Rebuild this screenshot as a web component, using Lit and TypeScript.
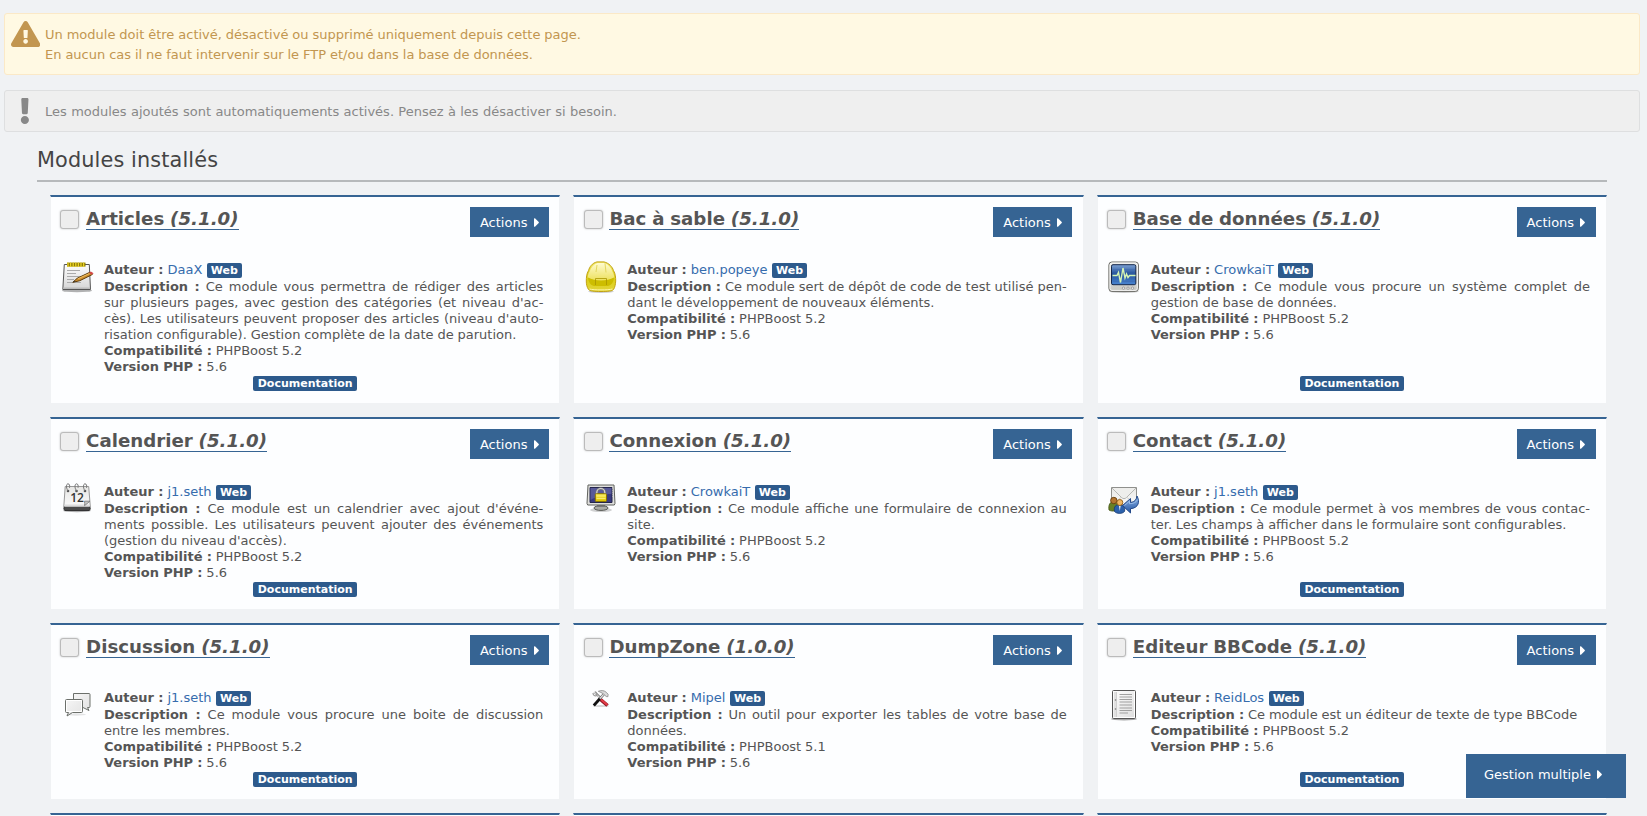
import { LitElement, html, svg, css, nothing } from "lit";
import type { TemplateResult } from "lit";
import { customElement, property } from "lit/decorators.js";

interface ModuleInfo {
  name: string;
  version: string;
  author: string;
  description: string;
  compat: string;
  icon: string;
  doc: boolean;
}

const MODULES: ModuleInfo[] = [
  { name: "Articles", version: "5.1.0", author: "DaaX", icon: "articles", compat: "5.2", doc: true,
    description: "Ce module vous permettra de rédiger des articles sur plusieurs pages, avec gestion des catégories (et niveau d'ac\u00ADcès). Les utilisateurs peuvent proposer des articles (niveau d'auto\u00ADrisation configurable). Gestion complète de la date de parution." },
  { name: "Bac à sable", version: "5.1.0", author: "ben.popeye", icon: "helmet", compat: "5.2", doc: false,
    description: "Ce module sert de dépôt de code de test utilisé pen\u00ADdant le développement de nouveaux éléments." },
  { name: "Base de données", version: "5.1.0", author: "CrowkaiT", icon: "monitor", compat: "5.2", doc: true,
    description: "Ce module vous procure un système complet de gestion de base de données." },
  { name: "Calendrier", version: "5.1.0", author: "j1.seth", icon: "calendar", compat: "5.2", doc: true,
    description: "Ce module est un calendrier avec ajout d'événe\u00ADments possible. Les utilisateurs peuvent ajouter des événements (gestion du niveau d'accès)." },
  { name: "Connexion", version: "5.1.0", author: "CrowkaiT", icon: "lock", compat: "5.2", doc: false,
    description: "Ce module affiche une formulaire de connexion au site." },
  { name: "Contact", version: "5.1.0", author: "j1.seth", icon: "contact", compat: "5.2", doc: true,
    description: "Ce module permet à vos membres de vous contac\u00ADter. Les champs à afficher dans le formulaire sont configurables." },
  { name: "Discussion", version: "5.1.0", author: "j1.seth", icon: "chat", compat: "5.2", doc: true,
    description: "Ce module vous procure une boite de discussion entre les membres." },
  { name: "DumpZone", version: "1.0.0", author: "Mipel", icon: "tools", compat: "5.1", doc: false,
    description: "Un outil pour exporter les tables de votre base de données." },
  { name: "Editeur BBCode", version: "5.1.0", author: "ReidLos", icon: "page", compat: "5.2", doc: true,
    description: "Ce module est un éditeur de texte de type BBCode" },
];

const caret = html`<svg class="caret" viewBox="0 0 192 512" aria-hidden="true"><path fill="currentColor" d="M0 384.662V127.338c0-17.818 21.543-26.741 34.142-14.142l128.662 128.662c7.81 7.81 7.81 20.474 0 28.284L34.142 398.804C21.543 411.404 0 402.48 0 384.662z"/></svg>`;

const ICONS: Record<string, TemplateResult> = {
  articles: svg`
    <defs><linearGradient id="g" x2="0" y2="1"><stop offset="0" stop-color="#fdfdfd"/><stop offset="1" stop-color="#d6d6d6"/></linearGradient></defs>
    <ellipse cx="15" cy="29.7" rx="15" ry="1.6" fill="#000" opacity=".3"/>
    <path d="M2.3 3.5h25l1.200 25H.8z" fill="url(#g)" stroke="#555" stroke-width="1"/>
    <path d="M1.300 26.500h26.800v1.500H1.300z" fill="#bbb"/>
    <path d="M5 3.600h18.500" stroke="#8d7b00" stroke-width="4"/>
    <path d="M6 1.500v4.500M8.600 1.500v4.500M11.200 1.500v4.500M13.800 1.500v4.500M16.400 1.500v4.500M19 1.500v4.500M21.600 1.500v4.500" stroke="#ead32a" stroke-width="1.300"/>
    <path d="M5 9.500h13M5 12.500h9M5 15.500h17M5 18.500h7M5 21.500h14" stroke="#aaa"/>
    <path d="M10.800 21.300l4.500-4.100L28 11.200l2.300 2.300-12.500 6.200z" fill="#cf8f2c" stroke="#5e3c0a" stroke-width="1"/>
    <path d="M16 17.800l11.500-5.300" stroke="#f0bf62"/>
    <path d="M27 11.700l1.800-1.200 2.800 1.800-1.900 1.500z" fill="#d34747"/>
    <path d="M10.800 21.300l1.500-1.500 1.200.8z" fill="#333"/>`,
  helmet: svg`
    <defs><linearGradient id="g" x2="0" y2="1"><stop offset="0" stop-color="#f2e86c"/><stop offset=".55" stop-color="#dccf16"/><stop offset="1" stop-color="#e2d53a"/></linearGradient>
    <linearGradient id="h" x2="0" y2="1"><stop offset="0" stop-color="#fffbcf"/><stop offset="1" stop-color="#ece05a"/></linearGradient></defs>
    <ellipse cx="16" cy="30.600" rx="13" ry="1.300" fill="#000" opacity=".2"/>
    <path d="M12 .9h7c5 1.200 8.500 5.100 9.500 8.700 2 3 2.200 7.400 2.200 10.400-.3 3-.5 6-2.200 8.500-1.500 1.600-5 2-12.500 2s-11-.4-12.500-2C1.800 26 1.300 23 1.300 20c0-3 .2-7.400 2.200-10.400C4.500 6 7 2.100 12 .9z" fill="url(#g)" stroke="#c2a314"/>
    <path d="M12.500 2h6.500c4.500 1.300 7 4.500 8.300 8.200 1 2 2 4 2 6.500-8 4.500-18.600 4.500-26.600 0 0-2.500 1-4.500 2-6.500C6 6.500 8.500 3.300 12.500 2z" fill="url(#h)"/>
    <path d="M3 16.500c7 4 19 4 26 0-.5 5-2.500 7.500-6 8.500H9c-3.500-1-5.500-3.500-6-8.500z" fill="#cdbd00"/>
    <path d="M10.500 24v-6.500h11V24" fill="none" stroke="#a99600" stroke-width=".8"/>
    <path d="M4.500 28c4 1.200 19 1.200 23 0" fill="none" stroke="#fff7a5"/>
    <path d="M20 2.500l1 9M12 4l-1 7" stroke="#e4d85e" fill="none"/>`,
  monitor: svg`
    <defs><linearGradient id="g" x2="0" y2="1"><stop offset="0" stop-color="#e9e9e4"/><stop offset="1" stop-color="#c9c9c4"/></linearGradient>
    <linearGradient id="h" x2="0" y2="1"><stop offset="0" stop-color="#7da2d4"/><stop offset=".45" stop-color="#23529b"/><stop offset="1" stop-color="#4a86d2"/></linearGradient></defs>
    <ellipse cx="16" cy="30.600" rx="15" ry="1.300" fill="#000" opacity=".2"/>
    <rect x=".9" y="1" width="29.500" height="29.400" rx="3" fill="url(#g)" stroke="#6a6a65"/>
    <rect x="2" y="2" width="27.300" height="27.400" rx="2" fill="none" stroke="#fff" opacity=".8"/>
    <rect x="3.500" y="3.700" width="24.300" height="20" rx="1.500" fill="url(#h)" stroke="#16294d"/>
    <path d="M5 8.500h22M5 12.500h22M5 16.500h22M5 20.500h22" stroke="#3c66a8" stroke-width=".4"/>
    <path d="M4.500 14.500H9l1.500-3 2 10 2.500-14.500 2 10 1.500-4 1.500 3.500 1.500-2h6" fill="none" stroke="#d6f5b4" stroke-width="1.400"/>
    <circle cx="15.500" cy="27.200" r="1.200" fill="#eee" stroke="#888" stroke-width=".7"/><circle cx="20" cy="27.200" r="1.200" fill="#eee" stroke="#888" stroke-width=".7"/><circle cx="24.500" cy="27.200" r="1.200" fill="#eee" stroke="#888" stroke-width=".7"/>`,
  calendar: svg`
    <defs><linearGradient id="g" x2="0" y2="1"><stop offset="0" stop-color="#e6e6e4"/><stop offset="1" stop-color="#fafafa"/></linearGradient></defs>
    <ellipse cx="15" cy="27.700" rx="14" ry="1.500" fill="#000" opacity=".3"/>
    <path d="M2.300 23h25.500l.5 3-1 1.500H2.800L1.800 26z" fill="#4b4b4b" stroke="#222" stroke-width=".8"/>
    <path d="M3.200 3.500h23.500l1.600 20H1.800z" fill="url(#g)" stroke="#999"/>
    <path d="M3 22.500h24.500" stroke="#ddd" stroke-width="2"/>
    <path d="M22.500 22.700c.3-1.500.3-3.200 0-4.500H28z" fill="#c5c5c3" stroke="#777" stroke-width=".8"/>
    <circle cx="6" cy="8" r="1.300" fill="#555"/><circle cx="14.500" cy="8" r="1.300" fill="#555"/><circle cx="23" cy="8" r="1.300" fill="#555"/>
    <path d="M6 8C3.500 4 4.500 .8 6 .8s2 2 1.500 4M14.500 8C12 4 13 .8 14.500 .8s2 2 1.500 4M23 8c-2.500-4-1.500-7.200 0-7.200s2 2 1.500 4" fill="none" stroke="#777" stroke-width="1"/>
    <text x="15" y="18.800" text-anchor="middle" font-family="Open Sans, sans-serif" font-size="12" font-weight="600" fill="#333">12</text>`,
  lock: svg`
    <defs><linearGradient id="g" x2="0" y2="1"><stop offset="0" stop-color="#f8eb54"/><stop offset="1" stop-color="#dcc300"/></linearGradient></defs>
    <ellipse cx="16" cy="27" rx="11" ry="2" fill="#000" opacity=".18"/>
    <ellipse cx="16" cy="25" rx="7" ry="2.400" fill="#a9aaa5" stroke="#565854"/>
    <path d="M12 21.500h8v2.500h-8z" fill="#777"/>
    <path d="M3 2h26l1 18.500-.7 1.500H2.700L2 20.500z" fill="#e0e0dd" stroke="#60625e"/>
    <path d="M5 4.500h22v15H5z" fill="#3a3b80" stroke="#25264b"/>
    <path d="M27.500 5v9" stroke="#aaa" stroke-dasharray="1 1"/>
    <path d="M5.500 5h21v6c-8 0-14 2-21 6z" fill="#7072ad" opacity=".55"/>
    <path d="M11.800 12V9.500a4 4 0 0 1 8 0V12" fill="none" stroke="#777" stroke-width="2.600"/>
    <path d="M11.800 12V9.500a4 4 0 0 1 8 0V12" fill="none" stroke="#d6d6d6" stroke-width="1.200"/>
    <rect x="10.300" y="10.700" width="11.200" height="7.800" rx="1" fill="url(#g)" stroke="#8a7400"/>
    <path d="M11.500 13h9M11.500 15.500h9" stroke="#fff596" stroke-width=".7"/>`,
  contact: svg`
    <defs><linearGradient id="g" x2="0" y2="1"><stop offset="0" stop-color="#e8e8e6"/><stop offset="1" stop-color="#fbfbfa"/></linearGradient>
    <linearGradient id="h" x2="0" y2="1"><stop offset="0" stop-color="#8eb4e6"/><stop offset="1" stop-color="#2456a4"/></linearGradient></defs>
    <path d="M3.500 4.500h25v17.500h-25z" fill="url(#g)" stroke="#8f908d"/>
    <path d="M4 5l9.500 9.500c1.500 1.500 3.500 1.500 5 0L28 5" fill="#eeeeec" stroke="#b5b6b3"/>
    <path d="M4 21.500l9-7M28 21.500l-9-7" stroke="#d2d2d0"/>
    <path d="M1 27c-.8-5 1-8.500 5-8.500s6 3 6 6.500c-2 3-8 4-11 2z" fill="#688024" stroke="#3e5010" stroke-width=".8"/>
    <circle cx="5.800" cy="17.500" r="3.200" fill="#b57631" stroke="#65400f" stroke-width=".9"/>
    <path d="M6.500 28.500c-1-5 1.500-7 5-7s6 2.500 5 7c-2 2.500-8 2.500-10 0z" fill="#2b61ac" stroke="#17396e" stroke-width=".8"/>
    <path d="M11 23l.8-1 .8 1-.8 5z" fill="#fff"/>
    <circle cx="11.800" cy="19.500" r="3" fill="#eeb866" stroke="#8e5a15" stroke-width=".9"/>
    <path d="M14.500 22.500l8-7v4c4-.2 6-2.800 6.500-6.500 3 5.500 1.800 12-6.500 12.700v4.300z" fill="url(#h)" stroke="#23498a"/>
    <path d="M16.500 22.500l5-4.300v2.500c3.500 0 6.500-1 8-4" fill="none" stroke="#a6c6f0" stroke-width=".8"/>`,
  chat: svg`
    <defs><linearGradient id="g" x2="1" y2="1"><stop offset="0" stop-color="#f6f6f6"/><stop offset="1" stop-color="#e2e2e2"/></linearGradient></defs>
    <ellipse cx="14" cy="25.500" rx="10" ry="1.200" fill="#000" opacity=".1"/>
    <path d="M11.500 4.500h15.500q1 0 1 1v12q0 1-1 1h-1.500l1.500 3-6-3h-9.500z" fill="url(#g)" stroke="#6c706b"/>
    <path d="M4.500 10.500h15q1 0 1 1v11q0 1-1 1H10.500L5 27l1.500-3.500h-2q-1 0-1-1v-11q0-1 1-1z" fill="url(#g)" stroke="#6c706b"/>
    <path d="M4.500 11.500h15v11h-15z" fill="none" stroke="#fff"/>`,
  tools: svg`
    <ellipse cx="16" cy="17" rx="8" ry="1" fill="#000" opacity=".15"/>
    <path d="M9.500 3L16 9.500" stroke="#777" stroke-width="2.400"/>
    <path d="M9 3L16 10" stroke="#ddd" stroke-width="1.200"/>
    <path d="M8 4c0 2.500 2 3.500 4 2.500L11 3" fill="none" stroke="#999" stroke-width="1.200"/>
    <path d="M15.500 10.500l7 6" stroke="#8e1620" stroke-width="3.600"/>
    <path d="M16 10.500l6.300 5.400" stroke="#e43c48" stroke-width="2"/>
    <path d="M15 9.500L19 5" stroke="#555" stroke-width="2.600"/>
    <path d="M15 9.500L19 5" stroke="#e2e2e2" stroke-width="1.200"/>
    <path d="M14.800 9.700l-6 6.800" stroke="#111" stroke-width="2.800"/>
    <path d="M13.300 2.300c3-1.300 6-.8 8 1l1.800 2-.2 2.400-1.700-.2-3-2.800c-1.400-1-3-1.500-4.900-2.400z" fill="#d9d9d9" stroke="#888" stroke-width=".8"/>`,
  page: svg`
    <defs><linearGradient id="g" x2="1" y2="1"><stop offset="0" stop-color="#fff"/><stop offset="1" stop-color="#ddd"/></linearGradient></defs>
    <ellipse cx="16" cy="30" rx="13" ry="1.500" fill="#000" opacity=".35"/>
    <rect x="4.500" y="1.500" width="23" height="28" rx="1" fill="url(#g)" stroke="#555"/>
    <path d="M5.500 28.500h21v-26" fill="none" stroke="#fff"/>
    <rect x="6" y="3" width="3" height="25" fill="#e1e1e1"/>
    <path d="M8.500 3v25" stroke="#d0d0d0"/>
    <circle cx="7.500" cy="11" r=".8" fill="#777"/><circle cx="7.500" cy="20" r=".8" fill="#777"/>
    <path d="M11.500 5.500H24M11.500 8H24M11.500 10.500H24M11.500 13H24M11.500 16H24M11.500 19H24M11.500 21.500H24M11.500 24H20" stroke="#a0a0a0" stroke-width="1.200"/>`,
};

@customElement("module-card")
class ModuleCard extends LitElement {
  @property({ attribute: false }) module?: ModuleInfo;

  static styles = css`
    :host {
      display: flex;
      flex-direction: column;
      box-sizing: border-box;
      background: #fdfeff;
      background-clip: padding-box;
      border: 1px solid transparent;
      border-top: 2px solid #366493;
      font-size: 13px;
      color: #555;
      min-height: 60px;
    }
    .head {
      display: flex;
      height: 65px;
      padding: 10px 10.4px 0 9.3px;
      box-sizing: border-box;
      align-items: flex-start;
    }
    .check {
      box-sizing: border-box;
      width: 19px;
      height: 19px;
      margin: 3px 6.8px 0 0;
      border: 1px solid #bbb;
      border-radius: 3px;
      background: #eee;
      box-shadow: 0 0 2px rgba(0, 0, 0, 0.25);
      flex: none;
    }
    .title {
      padding-top: 2px;
      font-size: 18.2px;
      font-weight: bold;
      line-height: 20px;
      word-spacing: -0.5px;
      border-bottom: 1px solid #366493;
      white-space: nowrap;
    }
    .action {
      box-sizing: border-box;
      width: 79px;
      margin-left: auto;
      height: 30px;
      padding-left: 10px;
      background: #366493;
      color: #fff;
      line-height: 32px;
      white-space: pre;
    }
    .caret {
      width: 5.6px;
      height: 15px;
      margin-left: 2px;
      vertical-align: -3px;
    }
    .body {
      display: flex;
      padding: 0 16px 1px 10.7px;
    }
    .icon {
      flex: none;
      width: 32px;
      height: 32px;
      margin: -1px 10.3px 0 0;
    }
    .info {
      flex: 1;
      line-height: 16px;
      text-align: justify;
      hyphens: manual;
      word-spacing: -0.3px;
    }
    .author {
      display: flex;
      height: 17px;
    }
    .link {
      margin-left: 4px;
      color: #366cad;
    }
    .badge {
      background: #2d5a8c;
      color: #fff;
      font-size: 11px;
      font-weight: bold;
      line-height: 15px;
      height: 15px;
      padding: 0 4px;
      border-radius: 2px;
    }
    .web { margin: 1px 0 0 4.5px; }
    .doc {
      align-self: center;
      margin: auto 0 12px;
      padding: 0 4.5px;
    }
  `;

  render() {
    const m = this.module;
    if (!m) return nothing;
    return html`
      <div class="head">
        <span class="check"></span>
        <span class="title">${m.name} <em>(${m.version})</em></span>
        <span class="action">Actions ${caret}</span>
      </div>
      <div class="body">
        <svg class="icon" viewBox="0 0 32 32">${ICONS[m.icon]}</svg>
        <div class="info">
          <div class="author"><b>Auteur :</b><span class="link">${m.author}</span><span class="badge web">Web</span></div>
          <div><b>Description :</b> ${m.description}</div>
          <div><b>Compatibilité :</b> PHPBoost ${m.compat}</div>
          <div><b>Version PHP :</b> 5.6</div>
        </div>
      </div>
      ${m.doc ? html`<span class="badge doc">Documentation</span>` : nothing}
    `;
  }
}

@customElement("app-root")
class AppRoot extends LitElement {
  static styles = css`
    :host {
      display: block;
      box-sizing: border-box;
      height: 816px;
      overflow: hidden;
      padding: 13px 7px 0 4px;
      background: #f0f2f4;
      color: #555;
      font-family: "DejaVu Sans", sans-serif;
      font-size: 13px;
    }
    .alert {
      display: flex;
      box-sizing: border-box;
      border: 1px solid;
      border-radius: 3px;
      line-height: 20px;
    }
    .warning {
      height: 62px;
      padding: 7px 6px;
      margin-bottom: 15px;
      background: #fff9e3;
      border-color: #fbe9c7;
      color: #c29650;
      word-spacing: -0.2px;
    }
    .notice {
      height: 42px;
      padding: 7px 6px;
      background: #efefef;
      border-color: #dedfe0;
      color: #888;
      word-spacing: 0.22px;
    }
    .symbol {
      display: flex;
      justify-content: center;
      width: 29px;
      margin-right: 5px;
      flex: none;
    }
    .symbol svg { height: 26px; flex: none; }
    .notice .symbol {
      width: 27px;
      margin-right: 7px;
    }
    .text { padding-top: 4px; }
    .section { padding: 16px 33px 0 33px; }
    .heading {
      height: 32px;
      margin: 0 0 13px;
      border-bottom: 2px solid #b6b9bb;
      color: #444;
      font-size: 20.8px;
      font-weight: normal;
      letter-spacing: 0.13px;
      line-height: 24px;
    }
    .grid {
      display: grid;
      grid-template-columns: repeat(3, 1fr);
      gap: 13px;
      padding-left: 13px;
    }
    .multiple {
      position: fixed;
      right: 21px;
      bottom: 18px;
      box-sizing: border-box;
      width: 160px;
      height: 44px;
      padding-left: 18px;
      background: #366493;
      color: #fff;
      line-height: 42px;
      white-space: pre;
    }
    .caret {
      width: 5.6px;
      height: 15px;
      margin-left: 2px;
      vertical-align: -3px;
    }
  `;

  render() {
    return html`
      <div class="alert warning">
        <span class="symbol"><svg viewBox="0 0 576 512"><path fill="currentColor" d="M569.517 440.013C587.975 472.007 564.806 512 527.94 512H48.054c-36.937 0-59.999-40.055-41.577-71.987L246.423 23.985c18.467-32.009 64.72-31.951 83.154 0l239.94 416.028zM288 354c-25.405 0-46 20.595-46 46s20.595 46 46 46 46-20.595 46-46-20.595-46-46-46zm-43.673-165.346l7.418 136c.347 6.364 5.609 11.346 11.982 11.346h48.546c6.373 0 11.635-4.982 11.982-11.346l7.418-136c.375-6.874-5.098-12.654-11.982-12.654h-63.383c-6.884 0-12.356 5.78-11.981 12.654z"/></svg></span>
        <div class="text">Un module doit être activé, désactivé ou supprimé uniquement depuis cette page.<br>En aucun cas il ne faut intervenir sur le FTP et/ou dans la base de données.</div>
      </div>
      <div class="alert notice">
        <span class="symbol"><svg viewBox="0 0 192 512"><path fill="currentColor" d="M176 432c0 44.112-35.888 80-80 80s-80-35.888-80-80 35.888-80 80-80 80 35.888 80 80zM25.26 25.199l13.6 272C39.499 309.972 50.041 320 62.83 320h66.34c12.789 0 23.331-10.028 23.97-22.801l13.6-272C167.425 11.49 156.496 0 142.77 0H49.23C35.504 0 24.575 11.49 25.26 25.199z"/></svg></span>
        <div class="text">Les modules ajoutés sont automatiquements activés. Pensez à les désactiver si besoin.</div>
      </div>
      <div class="section">
        <h1 class="heading">Modules installés</h1>
        <div class="grid">
          ${MODULES.map((m) => html`<module-card .module=${m}></module-card>`)}
          <module-card></module-card><module-card></module-card><module-card></module-card>
        </div>
      </div>
      <div class="multiple">Gestion multiple ${caret}</div>
    `;
  }
}
